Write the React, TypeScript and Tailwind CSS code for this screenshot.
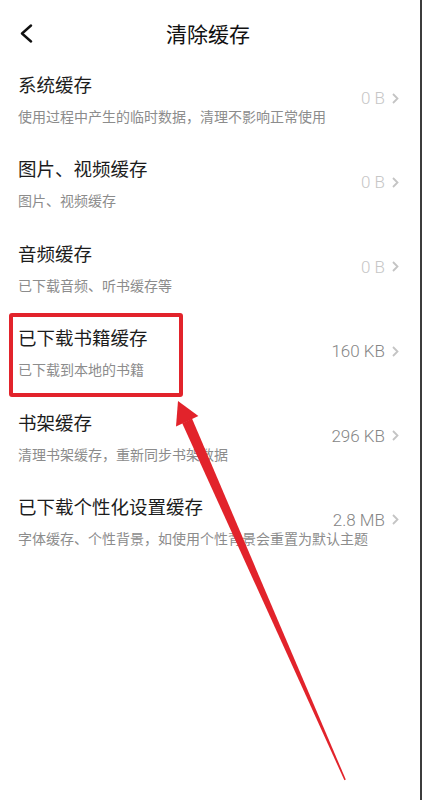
import React from "react"

const rows = [
  { title: "系统缓存", desc: "使用过程中产生的临时数据，清理不影响正常使用", size: "0 B", empty: true },
  { title: "图片、视频缓存", desc: "图片、视频缓存", size: "0 B", empty: true },
  { title: "音频缓存", desc: "已下载音频、听书缓存等", size: "0 B", empty: true },
  { title: "已下载书籍缓存", desc: "已下载到本地的书籍", size: "160 KB", empty: false },
  { title: "书架缓存", desc: "清理书架缓存，重新同步书架数据", size: "296 KB", empty: false },
  { title: "已下载个性化设置缓存", desc: "字体缓存、个性背景，如使用个性背景会重置为默认主题", size: "2.8 MB", empty: false },
]

function CacheRow({ title, desc, size, empty }: { title: string; desc: string; size: string; empty: boolean }) {
  return (
    <div className="flex h-[84.4px] items-start pl-[18px] pr-[21px]">
      <div className="flex min-w-0 flex-1 flex-col pt-[11px]">
        <div className="text-[18.5px] leading-[26px] text-[#1c1c1c]">{title}</div>
        <div className="mt-[10px] whitespace-nowrap text-[14px] leading-[18px] text-[#8c8c8c]">{desc}</div>
      </div>
      <div className="flex shrink-0 items-center gap-[7px] pt-[31px]">
        <span
          className={
            empty
              ? "font-['Roboto',sans-serif] text-[17px] font-light leading-[14px] text-[#c6c6c6]"
              : "font-['Roboto',sans-serif] text-[17px] font-light leading-[14px] text-[#858585]"
          }
        >
          {size}
        </span>
        <svg width="7" height="11" viewBox="0 0 7 11" fill="none">
          <polyline points="1,1 5.5,5.5 1,10" stroke="#c4c4c4" strokeWidth="1.8" strokeLinejoin="miter" />
        </svg>
      </div>
    </div>
  )
}

export default function App() {
  return (
    <div className="relative h-[800px] w-[422px] overflow-hidden border-r-2 border-[#3c3c3c] bg-white font-['Noto_Sans_CJK_SC',sans-serif]">
      <div className="relative flex h-[60px] items-center justify-center pb-[1px]">
        <svg className="absolute left-[19px] top-[24px]" width="14" height="19" viewBox="0 0 14 19" fill="none">
          <polyline points="12,1.5 3,9.5 12,17.5" stroke="#111" strokeWidth="2.4" strokeLinecap="round" strokeLinejoin="round" />
        </svg>
        <div className="pr-[4px] pt-[6px] text-[21px] leading-[28px] text-[#111]">清除缓存</div>
      </div>

      <div className="flex flex-col">
        {rows.map((r) => (
          <CacheRow key={r.title} {...r} />
        ))}
      </div>

      {/* annotation: red highlight box */}
      <div className="absolute left-[9px] top-[313px] h-[84px] w-[174px] rounded-[3px] border-[4px] border-[#e2232b]" />

      {/* annotation: arrow */}
      <svg className="absolute left-0 top-0" width="422" height="800" viewBox="0 0 422 800">
        <polygon points="178,401 198.4,416 176,426.4" fill="#e2232b" />
        <polygon points="192,418.6 345.8,779.6 344.4,780.3 182.2,423.2" fill="#e2232b" />
      </svg>
    </div>
  )
}
